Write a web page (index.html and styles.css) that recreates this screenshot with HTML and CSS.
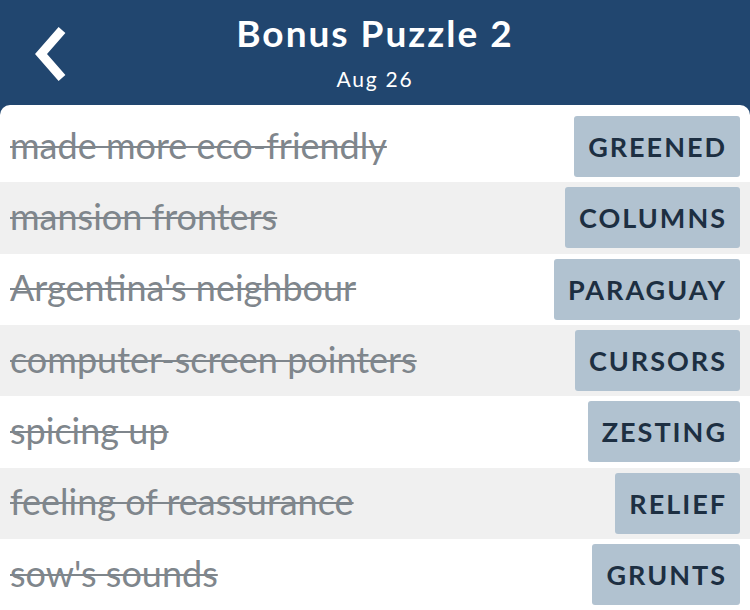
FILE: index.html
```html
<!DOCTYPE html>
<html>
<head>
<meta charset="utf-8">
<link rel="stylesheet" href="styles.css">
</head>
<body>
<div class="app">
  <header class="header">
    <div class="back">
      <svg width="40" height="56" viewBox="0 0 40 56"><path d="M32 4 L11 28 L32 52" fill="none" stroke="#fff" stroke-width="9" stroke-linecap="butt" stroke-linejoin="miter"/></svg>
    </div>
    <div class="titles">
      <div class="title">Bonus Puzzle 2</div>
      <div class="date">Aug 26</div>
    </div>
  </header>
  <main class="card">
    <div class="row"><span class="clue">made more eco-friendly</span><span class="tag">GREENED</span></div>
    <div class="row alt"><span class="clue">mansion fronters</span><span class="tag">COLUMNS</span></div>
    <div class="row"><span class="clue">Argentina's neighbour</span><span class="tag">PARAGUAY</span></div>
    <div class="row alt"><span class="clue">computer-screen pointers</span><span class="tag">CURSORS</span></div>
    <div class="row"><span class="clue">spicing up</span><span class="tag">ZESTING</span></div>
    <div class="row alt"><span class="clue">feeling of reassurance</span><span class="tag">RELIEF</span></div>
    <div class="row"><span class="clue">sow's sounds</span><span class="tag">GRUNTS</span></div>
  </main>
</div>
</body>
</html>
```
FILE: styles.css
```css
* { box-sizing: border-box; }
html, body { margin: 0; padding: 0; }
body {
  width: 750px;
  height: 610px;
  overflow: hidden;
  background: #21466f;
  font-family: Lato, "Open Sans", sans-serif;
}
.app { display: flex; flex-direction: column; }
.header {
  height: 105px;
  background: #21466f;
  position: relative;
  display: flex;
  justify-content: center;
}
.back {
  position: absolute;
  left: 30px;
  top: 26px;
}
.titles {
  display: flex;
  flex-direction: column;
  align-items: center;
  color: #fff;
}
.title {
  font-size: 37px;
  font-weight: 700;
  margin-top: 11px;
  line-height: 44px;
  letter-spacing: 2px;
}
.date {
  font-size: 21px;
  line-height: 28px;
  margin-top: 10px;
  letter-spacing: 1.8px;
}
.card {
  background: #fff;
  border-radius: 10px 10px 0 0;
  padding-top: 6px;
  display: flex;
  flex-direction: column;
}
.row {
  height: 71.33px;
  display: flex;
  align-items: center;
  justify-content: space-between;
  padding: 0 10px 0 10px;
}
.row.alt { background: #f0f0f0; }
.clue {
  color: #7f868c;
  font-size: 36px;
  margin-bottom: 4px;
  text-decoration: line-through;
  text-decoration-thickness: 2px;
}
.tag {
  background: #b1c2d0;
  color: #1d2f42;
  font-weight: 700;
  font-size: 27px;
  height: 61px;
  display: flex;
  align-items: center;
  padding: 0 13px 0 14px;
  border-radius: 3px;
  letter-spacing: 2px;
}
```
